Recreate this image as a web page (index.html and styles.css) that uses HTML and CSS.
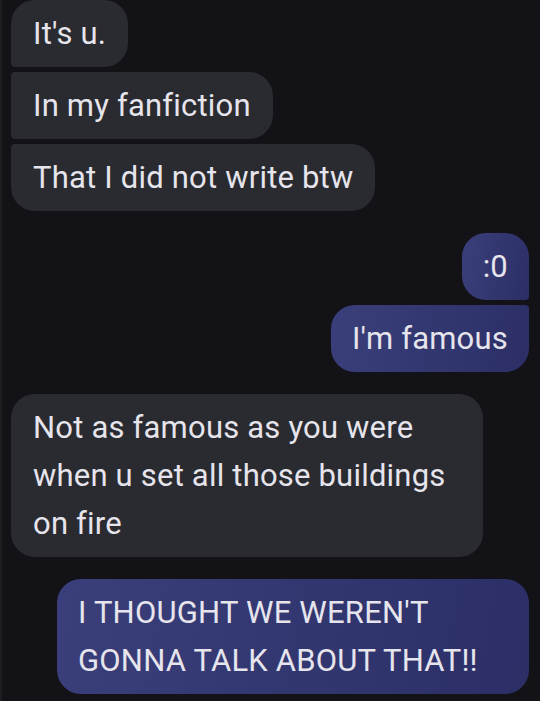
FILE: index.html
```html
<!DOCTYPE html>
<html>
  <head>
    <title>Messages</title>
    <link rel="stylesheet" href="styles.css">
  </head>
  <body>
    <div class="thread">
      <div class="group in">
        <div class="bubble first">It's u.</div>
        <div class="bubble mid">In my fanfiction</div>
        <div class="bubble last">That I did not write btw</div>
      </div>
      <div class="group out">
        <div class="bubble first">:0</div>
        <div class="bubble last">I'm famous</div>
      </div>
      <div class="group in">
        <div class="bubble">Not as famous as you were when u set all those buildings on fire</div>
      </div>
      <div class="group out">
        <div class="bubble">I THOUGHT WE WEREN'T GONNA TALK ABOUT THAT!!</div>
      </div>
    </div>
  </body>
</html>
```

FILE: styles.css
```css
body { margin: 0; background: #131217; font-family: Roboto, "Noto Sans", sans-serif; height: 701px; overflow: hidden; border-left: 2px solid #1d1d22; box-sizing: border-box; }

.thread { display: flex; flex-direction: column; gap: 22px; padding: 0 11px 0 9px; }

.group { display: flex; flex-direction: column; gap: 5px; }
.group.in { align-items: flex-start; }
.group.out { align-items: flex-end; }

.bubble { max-width: 472px; box-sizing: border-box; padding: 9.5px 22px; font-size: 31px; line-height: 48px; letter-spacing: 0.2px; color: #e6e4ec; border-radius: 24px; }
.in .bubble { background: #2a2b30; }
.out .bubble { background: linear-gradient(100deg, #3a3f7b, #2c2f66); padding: 9.5px 21px; }

.in .first { border-bottom-left-radius: 4px; }
.in .mid { border-radius: 4px 24px 24px 4px; }
.in .last { border-top-left-radius: 4px; }
.out .first { border-bottom-right-radius: 4px; }
.out .last { border-top-right-radius: 4px; }
```
